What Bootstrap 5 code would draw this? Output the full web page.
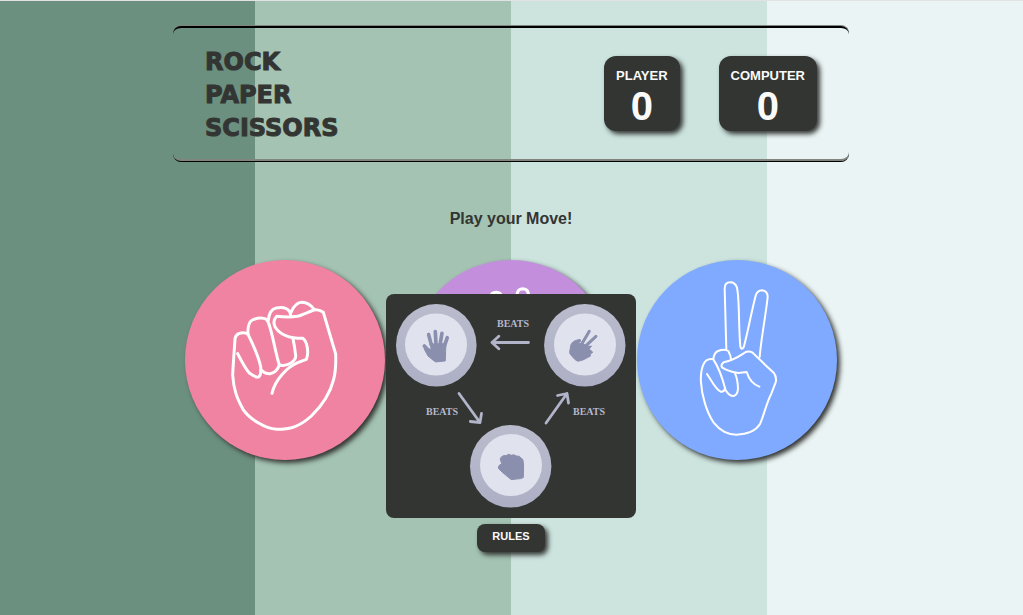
<!DOCTYPE html>
<html lang="en">
<head>
<meta charset="utf-8">
<meta name="viewport" content="width=device-width, initial-scale=1">
<title>Rock Paper Scissors</title>
<link href="https://cdn.jsdelivr.net/npm/bootstrap@5.3.0/dist/css/bootstrap.min.css" rel="stylesheet">
<style>
  :root { --ink: #333533; --paper: #fafafa; --drop: 3px 3px 5px #333533; }
  body {
    min-height: 100vh;
    padding: 25px 1px 0 0;
    border-top: 1px solid #e2e2e2;
    background: linear-gradient(90deg, #6b9080 calc(25% - 1px), #a4c3b2 calc(25% - 1px) 50%, #cce3de 50% 75%, #eaf4f4 75%) border-box;
    color: var(--ink);
    font-family: "Liberation Sans", Arial, sans-serif;
  }
  .scoreboard {
    border: solid #000;
    border-width: 2px 0 1px;
    border-radius: 8px;
    box-shadow: 0 -1px #808580, inset 0 -2px #808580;
    padding: 14px 32px 16px;
  }
  .game-title {
    font: 900 24px/33px "Arial Black", "DejaVu Sans", sans-serif;
    -webkit-text-stroke: 1px var(--ink);
    padding-top: 4px;
  }
  .scores { gap: 39px; }
  .score-box {
    background: var(--ink);
    color: var(--paper);
    border-radius: 12px;
    padding: 10px 12px 5px;
    box-shadow: var(--drop);
    font-weight: 700;
  }
  .score-name { font-size: 13px; line-height: 20px; }
  .score-value { font-size: 40px; line-height: 40px; }
  .prompt-line { font-size: 16px; line-height: 24px; font-weight: 700; margin: 45px 0 29px; }
  .moves { padding: 0 12px; }
  .move-btn { width: 200px; height: 200px; box-shadow: var(--drop); }
  .move-btn svg { fill: none; stroke: #fff; stroke-linecap: round; stroke-linejoin: round; }
  .move-rock { background: #f083a2; }
  .move-paper { background: #c38fdc; }
  .move-scissors { background: #80aaff; }
  .rules-area { margin-top: 63px; }
  .rules-btn {
    background: var(--ink);
    color: var(--paper);
    border-radius: 8px;
    padding: 4px 15px 8px;
    font-size: 11px;
    line-height: 16px;
    font-weight: 700;
    box-shadow: var(--drop);
  }
  .rules-panel {
    bottom: 100%;
    left: 50%;
    width: 250px;
    margin-bottom: 6px;
    background: var(--ink);
    border-radius: 8px;
  }
  .rules-panel text { font: 700 10px "Liberation Serif", "Times New Roman", serif; fill: #b6b8cc; }
</style>
</head>
<body>
<div class="container-fluid px-1">
  <div class="row g-0 justify-content-center">
    <div class="col-8">
      <header class="scoreboard d-flex justify-content-between align-items-center">
        <h1 class="game-title mb-0">ROCK<br>PAPER<br>SCISSORS</h1>
        <div class="scores d-flex">
          <div class="score-box text-center">
            <div class="score-name">PLAYER</div>
            <div class="score-value">0</div>
          </div>
          <div class="score-box text-center">
            <div class="score-name">COMPUTER</div>
            <div class="score-value">0</div>
          </div>
        </div>
      </header>

      <main>
        <p class="prompt-line text-center">Play your Move!</p>
        <div class="moves d-flex justify-content-between">
          <button type="button" class="move-btn move-rock border-0 rounded-circle p-0" aria-label="Rock">
            <svg class="d-block" viewBox="15 30 600 600" stroke-width="9">
              <path d="M173 311C186 337 197 358 209 370Q230 385 237 380Q244 374 242 350C236 321 217 279 204 253Q193 244 176 251Q166 256 165 267C163 300 160 335 158 375C161 420 171 445 189 478C208 506 254 536 290 538C330 538 357 531 394 498C430 463 453 420 461 388C468 362 468 339 467 312L430 187Q415 177 401 180C380 188 365 196 351 199Q328 203 290 199Q277 213 285 230C299 254 325 265 369 265Q379 273 382 293Q385 315 379 328L353 338C322 351 285 389 276 430"/>
              <path d="M204 253Q202 218 217 210Q242 199 260 208L266 220C280 261 286 307 298 345Q291 366 271 371Q255 372 243 359"/>
              <path d="M265 211Q268 178 289 174Q318 169 329 185L333 199M333 187Q346 157 366 157Q387 157 403 179M298 345Q315 350 333 339Q348 329 347 317Q344 289 339 266"/>
            </svg>
          </button>
          <button type="button" class="move-btn move-paper border-0 rounded-circle p-0" aria-label="Paper">
            <svg class="d-block" viewBox="93 30 600 600" stroke-width="9">
              <path d="M350 330L331 145Q332 127 349 127Q363 127 365 142L388 300L411 133Q413 116 429 116Q445 117 445 134L435 315L480 180Q490 162 503 172Q512 180 508 194L480 380Q470 500 390 520Q320 500 310 410L270 340Q265 320 282 319Q300 323 325 362Z"/>
            </svg>
          </button>
          <button type="button" class="move-btn move-scissors border-0 rounded-circle p-0" aria-label="Scissors">
            <svg class="d-block" viewBox="21 30 600 600" stroke-width="6">
              <path d="M289 298L284 116Q284 97 301 97Q315 97 321 113C329 150 325 222 331 290Q335 302 341 292C353 250 363 190 377 137Q382 121 396 121Q413 123 413 141C407 199 394 260 389 321"/>
              <path d="M231 372C246 394 257 419 272 425Q283 426 285 414C277 383 263 348 250 328Q239 325 228 332C215 345 211 374 213 397C215 434 229 486 251 518C270 542 292 554 319 554C348 553 377 543 390 522C401 499 410 456 424 431L437 397Q441 382 431 368L405 344L368 308Q358 302 347 306C327 319 315 329 281 337Q271 344 276 352Q291 363 325 369L350 366C357 389 367 402 388 410"/>
              <path d="M250 328Q252 308 264 303Q283 295 295 303Q302 316 303 328M285 416Q295 439 311 438Q323 435 324 415Q323 387 315 370"/>
            </svg>
          </button>
        </div>

        <div class="rules-area text-center">
          <div class="position-relative d-inline-block">
            <button type="button" class="rules-btn border-0 d-block" aria-expanded="true" aria-controls="rules">RULES</button>
            <div id="rules" class="rules-panel position-absolute translate-middle-x">
              <svg class="d-block w-100" viewBox="0 0 250 224" role="img" aria-label="Paper beats rock, rock beats scissors, scissors beats paper">
                <defs>
                  <linearGradient id="ring" x2="0" y2="1">
                    <stop stop-color="#babccd"/>
                    <stop offset="1" stop-color="#adb0c5"/>
                  </linearGradient>
                </defs>
                <g fill="url(#ring)">
                  <ellipse cx="50.300" cy="51.300" rx="40.300" ry="41.300"/>
                  <ellipse cx="198.800" cy="51.300" rx="40.700" ry="41.300"/>
                  <ellipse cx="124.700" cy="172.300" rx="40.700" ry="41.300"/>
                </g>
                <g fill="#e0e3ed">
                  <circle cx="50" cy="50.500" r="31"/>
                  <circle cx="199" cy="50.500" r="31"/>
                  <circle cx="125" cy="171" r="31"/>
                </g>
                <g stroke="#8b8fae" stroke-linecap="round" stroke-linejoin="round" fill="#8b8fae">
                  <!-- paper -->
                  <g transform="translate(14 16) scale(.333)">
                    <path stroke-width="11" d="M94 104L86 74M108 100L106 65M121 100L126 70M134 106L142 83M88 124L73 108"/>
                    <path stroke-width="3" d="M91 102L138 101L137 125L136 153L107 156L96 148L84 138L72 116L84 118L93 117Z"/>
                  </g>
                  <!-- scissors -->
                  <g transform="translate(159 16) scale(.333)">
                    <path stroke-width="9" d="M110 103L133 64M120 110L153 79M90 100L104 92"/>
                    <path stroke-width="3" d="M74 126L78 104Q84 91 104 89L101 99L115 102L126 108L140 109L132 117L143 126Q142 132 135 130L137 138L128 143L114 150L99 154L90 149L76 133Z"/>
                  </g>
                  <!-- rock -->
                  <path transform="translate(89 136) scale(.333)" stroke-width="3" d="M80 80Q86 75 94 77Q102 69 108 76Q117 72 124 78Q135 77 138 84L144 89L146 108L145 143L137 146L108 149L104 145L82 127L70 115Q69 106 80 101L76 88Z"/>
                </g>
                <g fill="none" stroke="#b2b5c9" stroke-width="2.800" stroke-linecap="round" stroke-linejoin="round">
                  <path d="M142.500 48.500H106M112.800 42.300L106 48.500L112.800 54.700"/>
                  <path d="M73 99.500L94 128.500M84.300 127.500L94 128.500L95.500 119.500"/>
                  <path d="M160 129L181 99.500M171.500 101.500L181 99.500L182.500 109"/>
                </g>
                <text x="111" y="33">BEATS</text>
                <text x="40" y="121">BEATS</text>
                <text x="187" y="121">BEATS</text>
              </svg>
            </div>
          </div>
        </div>
      </main>
    </div>
  </div>
</div>
<script src="https://cdn.jsdelivr.net/npm/bootstrap@5.3.0/dist/js/bootstrap.bundle.min.js"></script>
</body>
</html>
